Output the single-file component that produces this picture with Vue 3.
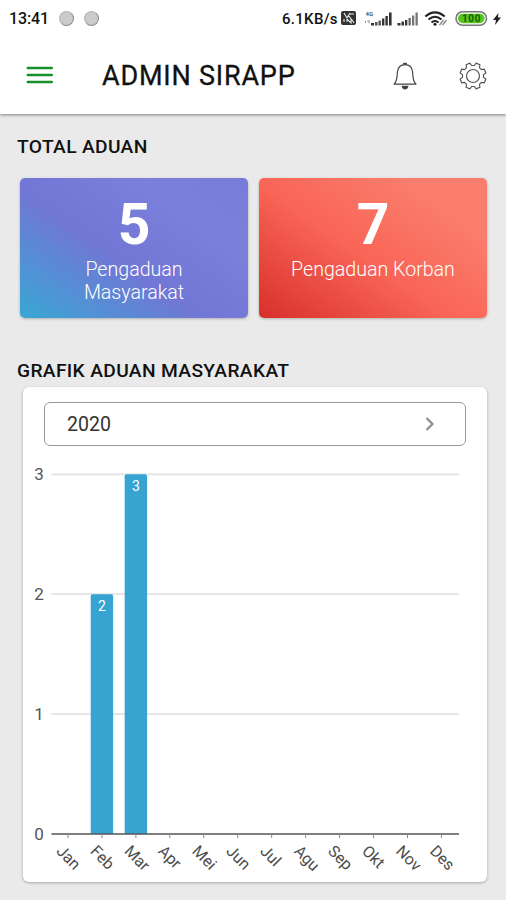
<script setup>
const months = ['Jan', 'Feb', 'Mar', 'Apr', 'Mei', 'Jun', 'Jul', 'Agu', 'Sep', 'Okt', 'Nov', 'Des']
const values = [0, 2, 3, 0, 0, 0, 0, 0, 0, 0, 0, 0]
const left = 27.5
const right = 435
const base = 374
const unit = 119.9
const step = 33.95
const center = (i) => left + step * (i + 0.5) - 0.5
const bars = values.map((v, i) => ({ v, i })).filter((b) => b.v > 0)
const toothPath = (() => {
  const n = 8
  const pts = []
  for (let k = 0; k < n; k++) {
    const a = (k * 360) / n + 22.5
    for (const [d, r] of [[-15, 10.6], [-9, 13.2], [9, 13.2], [15, 10.6]]) {
      const t = ((a + d) * Math.PI) / 180
      pts.push(`${(14 + r * Math.cos(t)).toFixed(2)} ${(14 + r * Math.sin(t)).toFixed(2)}`)
    }
  }
  return `M${pts.join('L')}Z`
})()
</script>

<template>
  <div class="screen">
    <div class="status">
      <span class="time">13:41</span>
      <i class="dot"></i>
      <i class="dot"></i>
      <span class="speed">6.1KB/s</span>
      <svg class="indicators" width="154" height="24" viewBox="0 0 154 24">
        <rect x="1" y="5" width="15" height="14" rx="2" fill="#333" />
        <path d="M4 7l3 5 3-5M10 8h4M4 16v-3M7 16v-3l4 4v-4M12 14l2 3M8 9l4 5" fill="none" stroke="#eee" stroke-width="1.1" />
        <text x="25.500" y="9.500" class="net">4G</text>
        <path d="M25.500 15v2M27 15h3M29 15v2.500" stroke="#999" stroke-width="1" fill="none" />
        <g fill="#333">
          <rect x="31" y="17" width="3" height="2.500" />
          <rect x="35" y="16" width="2.600" height="3.500" fill="#555" />
          <rect x="38.500" y="14.500" width="2.400" height="5" fill="#555" />
          <rect x="42" y="12.500" width="2.400" height="7" />
          <rect x="45.400" y="10" width="2.400" height="9.500" />
          <rect x="49" y="6.500" width="2.600" height="13" />
          <rect x="57.500" y="17" width="3" height="2.500" />
          <rect x="61.500" y="15.500" width="2.500" height="4" />
          <rect x="65" y="14" width="2.300" height="5.500" />
          <rect x="68.500" y="12" width="2.300" height="7.500" fill="#666" />
          <rect x="72" y="9.500" width="2.300" height="10" fill="#777" />
          <rect x="75.500" y="6.500" width="2.300" height="13" fill="#777" />
        </g>
        <g fill="none" stroke="#222" stroke-width="2">
          <path d="M85.300 10.500q9.700-8.300 19.400 0" />
          <path d="M88.500 13.500q6.500-5.600 13 0" />
          <path d="M91.500 16.400q3.500-2.900 7 0" />
        </g>
        <circle cx="95" cy="18.300" r="1.500" fill="#222" />
        <path d="M99.500 19l4-5M102.500 19l4-5" stroke="#888" stroke-width="1.300" />
        <rect x="116" y="5.700" width="30.500" height="13.500" rx="6.700" fill="#fff" stroke="#777" stroke-width="1.600" />
        <rect x="118" y="7.700" width="26.500" height="9.500" rx="4.700" fill="#58c51b" />
        <text x="131.500" y="16" class="charge">100</text>
      </svg>
      <svg class="bolt" width="10" height="14" viewBox="0 0 10 14"><path d="M6.500 1L1 8H4L3 13l6-7.500H6Z" fill="#222" /></svg>
    </div>

    <header class="bar">
      <svg class="menu" width="27" height="20" viewBox="0 0 27 20">
        <path d="M1.800 3h24M1.800 10h24M1.800 17h24" stroke="#16902a" stroke-width="2.500" stroke-linecap="round" />
      </svg>
      <h1>ADMIN SIRAPP</h1>
      <svg class="bell" width="26" height="28" viewBox="0 0 26 28" fill="none" stroke="#444" stroke-width="1.200">
        <path d="M2 22.200C5.800 18.500 4.800 14 5.500 9.500 6.200 5.200 9.300 2.700 13 2.700s6.800 2.500 7.500 6.800c.7 4.500-.3 9 3.500 12.700Z" stroke-linejoin="round" />
        <path d="M12 1.800h2" stroke-width="2" stroke-linecap="round" />
        <path d="M10.300 24.300h5.400q-.6 2.500-2.700 2.500t-2.700-2.500Z" fill="#333" />
      </svg>
      <svg class="gear" width="28" height="28" viewBox="0 0 28 28" fill="none" stroke="#555" stroke-width="1.200" stroke-linejoin="round">
        <path :d="toothPath" />
        <circle cx="14" cy="14" r="6.500" />
      </svg>
    </header>

    <main>
      <h2>TOTAL ADUAN</h2>
      <div class="totals">
        <div class="card public">
          <strong>5</strong>
          <p>Pengaduan<br />Masyarakat</p>
        </div>
        <div class="card victim">
          <strong>7</strong>
          <p>Pengaduan Korban</p>
        </div>
      </div>

      <h2 class="second">GRAFIK ADUAN MASYARAKAT</h2>
      <section class="panel">
        <div class="select">
          <span>2020</span>
          <svg width="10" height="16" viewBox="0 0 10 16"><path d="M1.500 2l6 6-6 6" fill="none" stroke="#8b8b8b" stroke-width="2.200" /></svg>
        </div>
        <svg class="chart" width="463" height="422" viewBox="0 0 463 422">
          <g v-for="n in 4" :key="n">
            <line v-if="n > 1" :x1="left" :x2="right" :y1="base - (n - 1) * unit" :y2="base - (n - 1) * unit" stroke="#e2e2e2" stroke-width="1.700" />
            <text class="value" x="15" :y="base - (n - 1) * unit + 6">{{ n - 1 }}</text>
          </g>
          <g v-for="b in bars" :key="b.i">
            <path :d="`M${center(b.i) - 11.2} ${base}v${-b.v * unit + 2}q0-2 2-2h18.400q2 0 2 2v${b.v * unit - 2}Z`" fill="#37a3d0" />
            <text class="count" :x="center(b.i)" :y="base - b.v * unit + 17">{{ b.v }}</text>
          </g>
          <line :x1="left" :x2="right" :y1="base" :y2="base" stroke="#555" stroke-width="1.600" />
          <g v-for="(m, i) in months" :key="m">
            <line :x1="center(i)" :x2="center(i)" :y1="base" :y2="base + 4" stroke="#888" stroke-width="1" />
            <text class="month" :transform="`translate(${center(i) - 12.5} ${base + 18}) rotate(45)`">{{ m }}</text>
          </g>
        </svg>
      </section>
    </main>
  </div>
</template>

<style>
body { margin: 0; background: #eaeaea; }
</style>

<style scoped>
* { box-sizing: border-box; }
.screen { width: 506px; height: 900px; overflow: hidden; background: #eaeaea; font-family: Roboto, "Liberation Sans", sans-serif; color: #111; }
svg { display: block; flex: none; }
.status { position: relative; z-index: 1; height: 37px; display: flex; align-items: center; background: #fff; padding-left: 9px; }
.time { width: 50px; font-size: 16px; font-weight: 500; letter-spacing: -.1px; }
.dot { width: 15px; height: 15px; margin-right: 10px; border-radius: 50%; background: #cbcbcb; border: 1px solid #b5b5b5; border-right-color: #8d8d8d; border-bottom-color: #8d8d8d; }
.speed { margin-left: 173px; width: 58px; font-size: 15px; font-weight: 500; letter-spacing: .3px; white-space: nowrap; }
.indicators { margin-top: -1px; }
.net { font-size: 6px; font-weight: 700; fill: #555; }
.charge { font-size: 10px; font-weight: 700; fill: #176100; text-anchor: middle; letter-spacing: .6px; }
.bolt { margin-left: -2px; }
.bar { position: relative; height: 77px; display: flex; align-items: center; background: #fff; box-shadow: 0 1px 3px rgba(0, 0, 0, .45); padding: 0 19px 0 26px; }
.menu { margin-top: -2px; }
h1 { margin: 0 0 0 49px; width: 290px; font-size: 27px; line-height: 32px; font-weight: 400; letter-spacing: .8px; -webkit-text-stroke: .3px #111; }
.gear { margin-left: 41px; }
main { padding: 21px 18px 0; }
h2 { margin: 0 0 0 -1px; height: 24px; font-size: 19.2px; line-height: 24px; font-weight: 500; letter-spacing: .35px; white-space: nowrap; }
.totals { display: grid; grid-template-columns: 228px 228px; gap: 11px; margin: 19px 0 0 2px; }
.card { height: 140px; border-radius: 5px; padding-top: 14px; text-align: center; color: #fff; box-shadow: 0 1px 3px rgba(0, 0, 0, .25); }
.public { background: linear-gradient(35deg, #38a7d4 0%, #7276d5 43%, #7a80dc 75%, #777bd9 100%); }
.victim { background: linear-gradient(35deg, #d7302a 0%, #f96556 45%, #fa7d6d 80%, #fa7d6d 100%); }
strong { display: block; font-size: 57px; line-height: 66px; font-weight: 700; }
p { margin: 0; font-size: 19.6px; line-height: 23px; font-weight: 300; }
.second { margin-top: 41px; }
.panel { width: 464px; height: 495px; margin: 4px 0 0 5px; padding-top: 15px; background: #fff; border-radius: 6px; box-shadow: 0 1px 3px rgba(0, 0, 0, .3); }
.select { display: flex; align-items: center; justify-content: space-between; width: 422px; height: 44px; margin-left: 21px; padding: 0 30px 0 22px; border: 1.5px solid #999; border-radius: 6px; font-size: 19.5px; color: #333; }
.chart { margin: 14px 0 0 1px; }
.value { font-size: 17px; fill: #555; text-anchor: middle; }
.count { font-size: 14px; fill: #fff; text-anchor: middle; }
.month { font-size: 16px; fill: #4c4c4c; }
</style>
